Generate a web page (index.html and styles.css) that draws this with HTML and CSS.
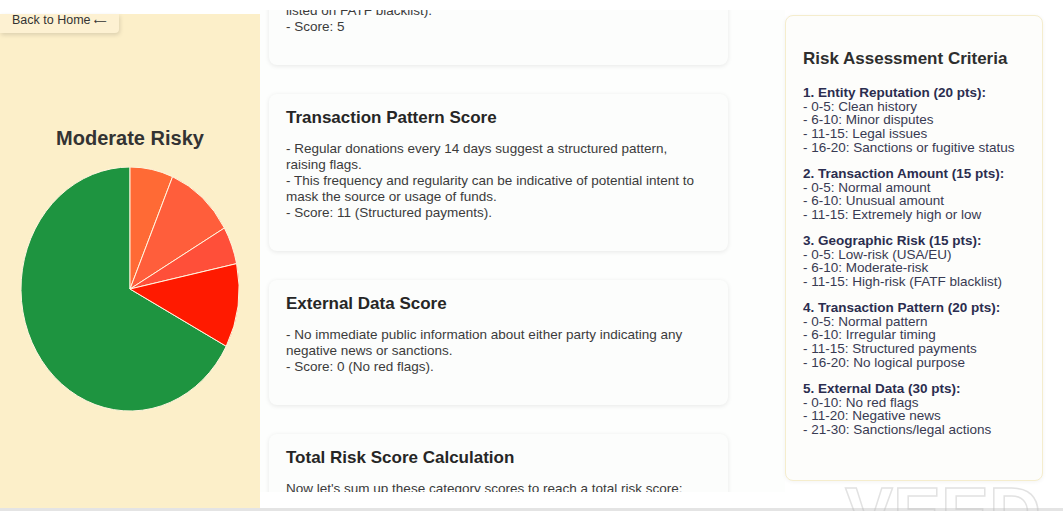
FILE: index.html
```html
<!DOCTYPE html>
<html lang="en">
<head>
<meta charset="utf-8">
<title>Risk Report</title>
<link rel="stylesheet" href="styles.css">
</head>
<body>
<div class="page">
  <div class="app">
    <aside class="summary">
      <div class="back-btn">Back to Home <span class="arrow">⟵</span></div>
      <h2 class="summary-title">Moderate Risky</h2>
      <svg class="pie" viewBox="-1 -1 2 2" preserveAspectRatio="none">
        <g stroke="#fff6e0" stroke-width="1">
          <path vector-effect="non-scaling-stroke" d="M0 0 L0.8829 0.4695 A1 1 0 1 1 0 -1 Z" fill="#1e9440"/>
          <path vector-effect="non-scaling-stroke" d="M0 0 L0 -1 A1 1 0 0 1 0.3907 -0.9205 Z" fill="#ff6a35"/>
          <path vector-effect="non-scaling-stroke" d="M0 0 L0.3907 -0.9205 A1 1 0 0 1 0.8660 -0.5 Z" fill="#ff5e3b"/>
          <path vector-effect="non-scaling-stroke" d="M0 0 L0.8660 -0.5 A1 1 0 0 1 0.9781 -0.2079 Z" fill="#ff4f39"/>
          <path vector-effect="non-scaling-stroke" d="M0 0 L0.9781 -0.2079 A1 1 0 0 1 0.8829 0.4695 Z" fill="#ff1a00"/>
        </g>
      </svg>
    </aside>

    <main class="details">
      <section class="card">
        <h3>Geographic Risk Score</h3>
        <p>- Recipient is based in a high-risk jurisdiction (country is<br>listed on FATF blacklist).<br>- Score: 5</p>
      </section>
      <section class="card">
        <h3>Transaction Pattern Score</h3>
        <p>- Regular donations every 14 days suggest a structured pattern, raising flags.<br>- This frequency and regularity can be indicative of potential intent to mask the source or usage of funds.<br>- Score: 11 (Structured payments).</p>
      </section>
      <section class="card">
        <h3>External Data Score</h3>
        <p>- No immediate public information about either party indicating any negative news or sanctions.<br>- Score: 0 (No red flags).</p>
      </section>
      <section class="card">
        <h3>Total Risk Score Calculation</h3>
        <p>Now let's sum up these category scores to reach a total risk score:<br>- Entity Reputation: 7<br>- Transaction Amount: 10</p>
      </section>
    </main>

    <div class="criteria-col">
      <section class="criteria">
        <h2 class="criteria-title">Risk Assessment Criteria</h2>
        <div class="group">
          <div class="group-title">1. Entity Reputation (20 pts):</div>
          <div>- 0-5: Clean history</div>
          <div>- 6-10: Minor disputes</div>
          <div>- 11-15: Legal issues</div>
          <div>- 16-20: Sanctions or fugitive status</div>
        </div>
        <div class="group">
          <div class="group-title">2. Transaction Amount (15 pts):</div>
          <div>- 0-5: Normal amount</div>
          <div>- 6-10: Unusual amount</div>
          <div>- 11-15: Extremely high or low</div>
        </div>
        <div class="group">
          <div class="group-title">3. Geographic Risk (15 pts):</div>
          <div>- 0-5: Low-risk (USA/EU)</div>
          <div>- 6-10: Moderate-risk</div>
          <div>- 11-15: High-risk (FATF blacklist)</div>
        </div>
        <div class="group">
          <div class="group-title">4. Transaction Pattern (20 pts):</div>
          <div>- 0-5: Normal pattern</div>
          <div>- 6-10: Irregular timing</div>
          <div>- 11-15: Structured payments</div>
          <div>- 16-20: No logical purpose</div>
        </div>
        <div class="group">
          <div class="group-title">5. External Data (30 pts):</div>
          <div>- 0-10: No red flags</div>
          <div>- 11-20: Negative news</div>
          <div>- 21-30: Sanctions/legal actions</div>
        </div>
      </section>
    </div>
  </div>
  <div class="bottom-bar"></div>
  <div class="watermark">VEED</div>
</div>
</body>
</html>
```

FILE: styles.css
```css
html, body {
  margin: 0;
  padding: 0;
  background: #ffffff;
}

body {
  font-family: "Liberation Sans", Arial, sans-serif;
}

.page {
  position: relative;
  width: 1063px;
  height: 511px;
  overflow: hidden;
  padding-top: 10px;
  box-sizing: border-box;
  display: flex;
  flex-direction: column;
}

.app {
  display: flex;
  height: 498px;
  flex: none;
}

/* Left summary panel */
.summary {
  width: 260px;
  flex: none;
  margin-top: 4px;
  background: #fcefc9;
  display: flex;
  flex-direction: column;
  align-items: center;
}

.back-btn {
  align-self: flex-start;
  height: 19px;
  padding: 0 12px 0 12px;
  font-size: 12.5px;
  line-height: 12px;
  color: #333333;
  background: #fdf1d2;
  border-radius: 0 0 4px 0;
  box-shadow: 1px 2px 4px rgba(0, 0, 0, 0.13);
  white-space: nowrap;
}

.arrow {
  font-family: "DejaVu Sans", sans-serif;
  font-size: 9px;
}

.summary-title {
  margin: 93px 0 0;
  font-size: 20px;
  line-height: 24px;
  font-weight: bold;
  color: #333333;
}

.pie {
  display: block;
  margin-top: 17px;
  width: 218px;
  height: 244px;
}

/* Middle details column */
.details {
  width: 525px;
  flex: none;
  height: 482px;
  overflow: hidden;
  padding-left: 9px;
  box-sizing: border-box;
  background: #fdfefd;
}

.card {
  width: 459px;
  box-sizing: border-box;
  background: #fcfdfc;
  border-radius: 8px;
  box-shadow: 0 1px 5px rgba(0, 0, 0, 0.09);
  padding: 14px 22px 30px 17px;
  margin-bottom: 29px;
}

.card:first-child {
  margin-top: -70px;
}

.card h3 {
  margin: 0 0 13px;
  font-size: 17px;
  line-height: 20px;
  font-weight: bold;
  color: #262626;
}

.card p {
  margin: 0;
  font-size: 13.5px;
  line-height: 16px;
  color: #3b3b3b;
}

/* Right criteria column */
.criteria-col {
  flex: none;
}

.criteria {
  width: 258px;
  height: 466px;
  margin-top: 5px;
  box-sizing: border-box;
  background: #fdfdfb;
  border: 1px solid #f5edcd;
  border-radius: 8px;
  box-shadow: 0 1px 4px rgba(0, 0, 0, 0.05);
  padding: 33px 17px 0;
}

.criteria-title {
  margin: 0 0 17.2px;
  font-size: 17px;
  line-height: 20px;
  font-weight: bold;
  color: #2e2e2e;
}

.group {
  margin-bottom: 12.8px;
  font-size: 13.5px;
  line-height: 13.6px;
  color: #383a52;
}

.group-title {
  font-weight: bold;
  color: #2b2d4f;
}

.bottom-bar {
  height: 3px;
  flex: none;
  background: #e4e4e4;
}

.watermark {
  position: absolute;
  left: 845px;
  top: 477px;
  font-size: 72px;
  line-height: 72px;
  font-weight: bold;
  color: transparent;
  -webkit-text-stroke: 1.5px rgba(190, 190, 190, 0.45);
  pointer-events: none;
}
```
